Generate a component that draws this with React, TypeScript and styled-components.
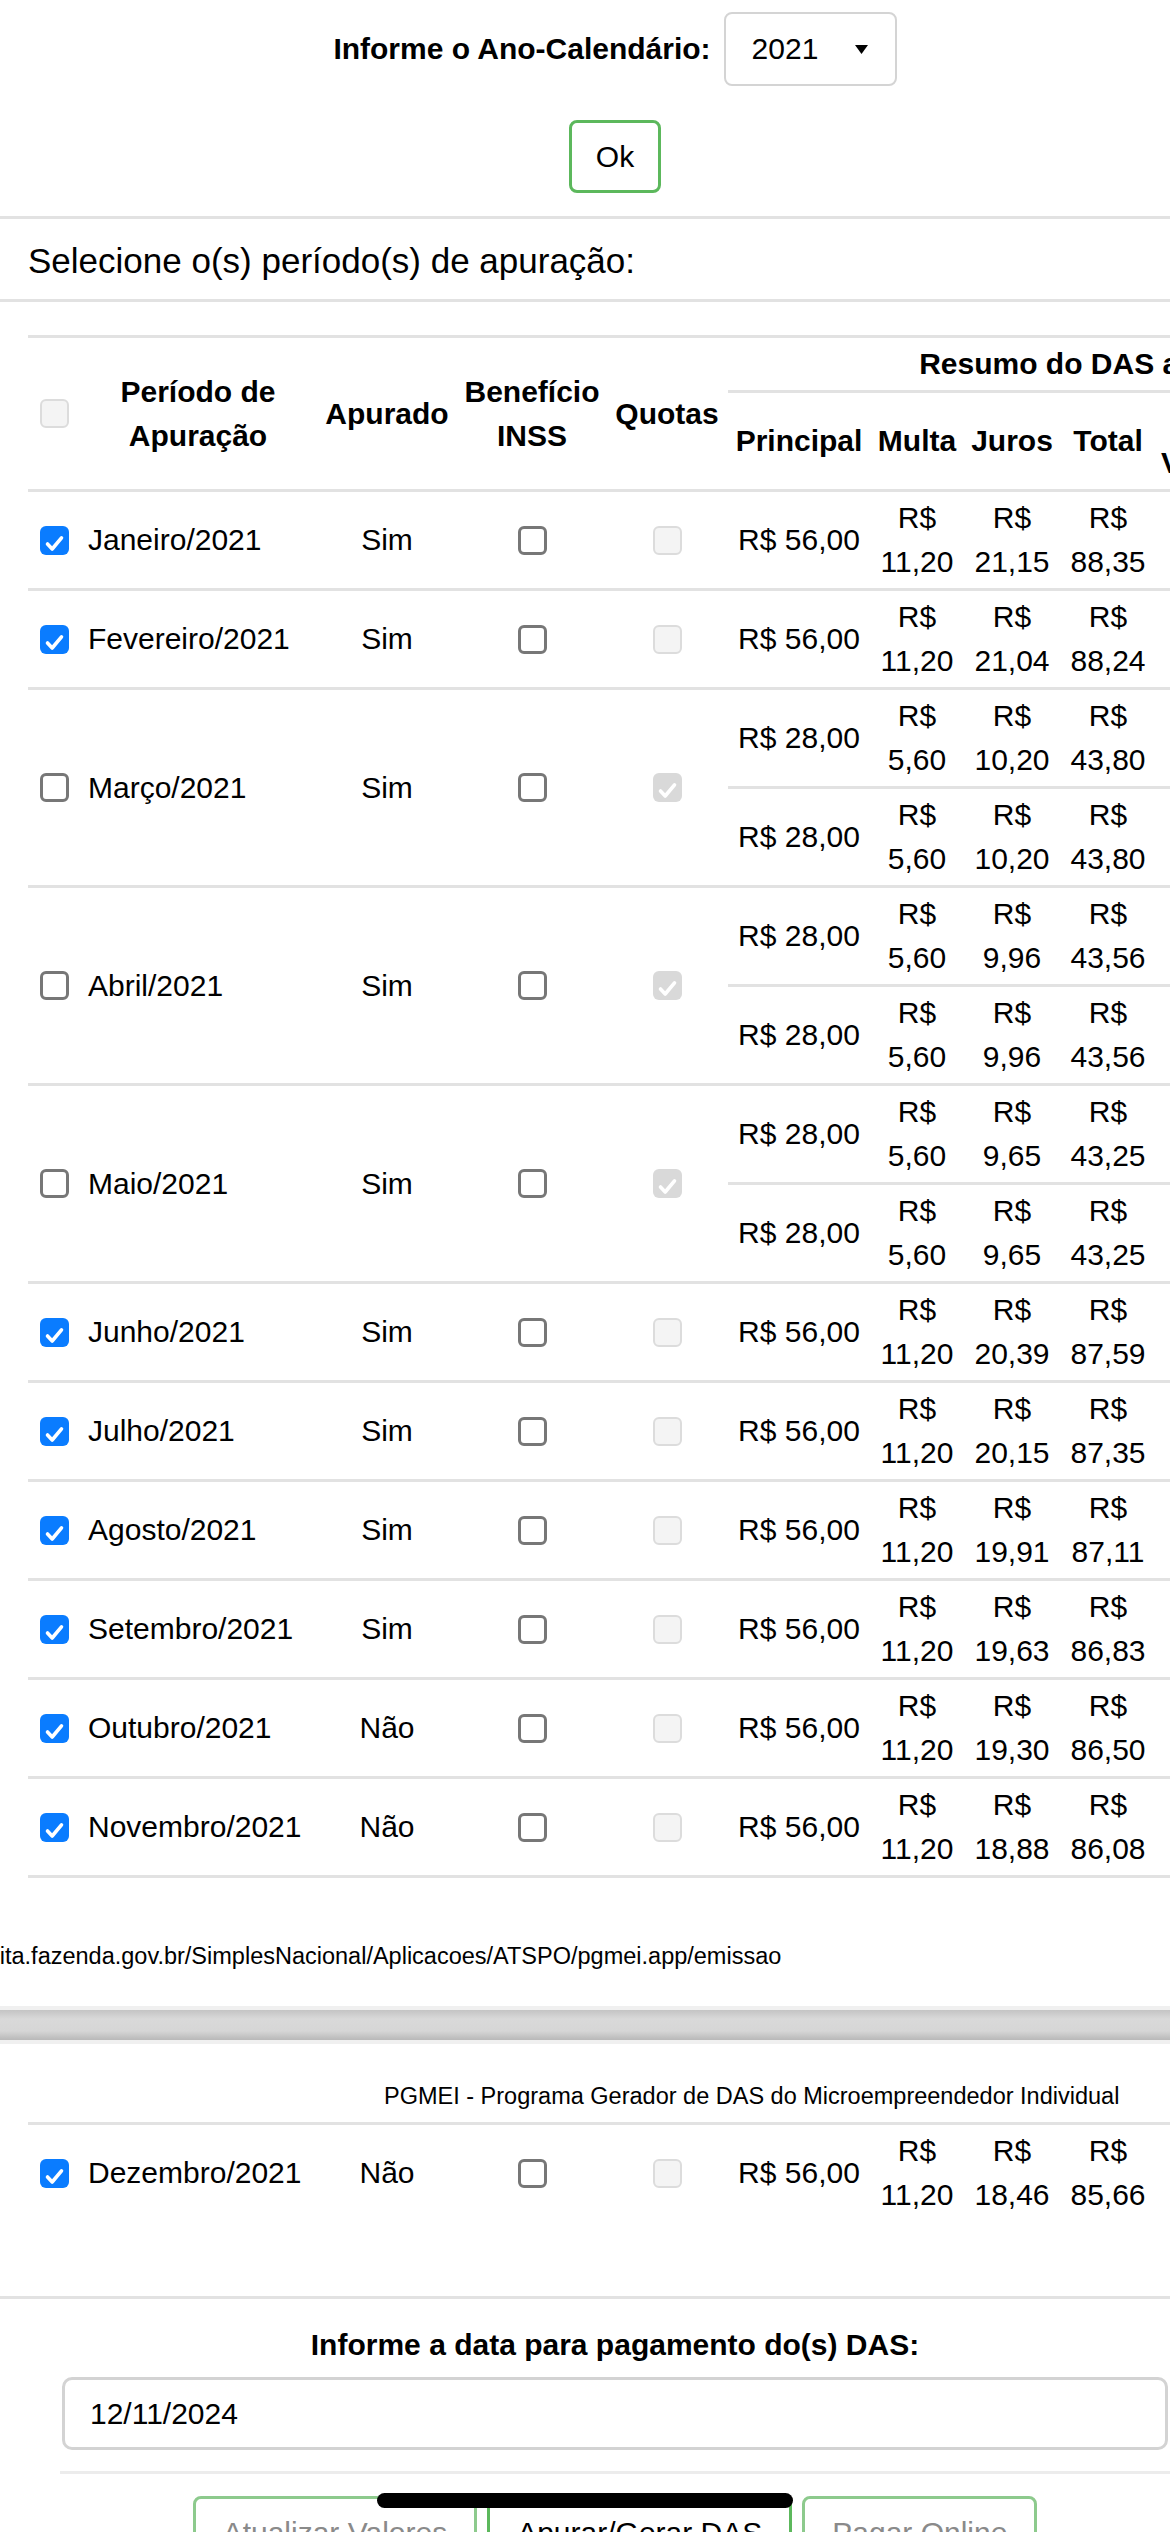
import React from "react";
import styled, { createGlobalStyle, css } from "styled-components";

const GlobalStyle = createGlobalStyle`
  html, body {
    margin: 0;
    padding: 0;
    overflow: hidden;
    background: #fff;
  }
  body {
    font-family: "Liberation Sans", Arial, Helvetica, sans-serif;
    font-size: 30px;
    color: #000;
  }
`;

const LINE = "#e2e2e2";

const Page = styled.div`
  width: 1230px;
`;

const YearBar = styled.div`
  display: flex;
  justify-content: center;
  align-items: center;
  gap: 13px;
  padding-top: 12px;
`;

const FieldLabel = styled.span`
  font-weight: 700;
  font-size: 30px;
`;

const SelectBox = styled.div`
  display: flex;
  align-items: center;
  justify-content: space-between;
  box-sizing: border-box;
  width: 173px;
  height: 74px;
  padding: 0 27px 0 26px;
  border: 2px solid #d4d4d4;
  border-radius: 8px;
  font-size: 30px;
`;

const Centered = styled.div<{ $top: number; $gap?: number }>`
  display: flex;
  justify-content: center;
  gap: ${({ $gap }) => $gap ?? 0}px;
  margin-top: ${({ $top }) => $top}px;
`;

const ActionButton = styled.button<{ $muted?: boolean; $pad?: number }>`
  box-sizing: border-box;
  height: 73px;
  padding: 0 ${({ $pad }) => $pad ?? 27}px;
  background: #fff;
  border: 3px solid ${({ $muted }) => ($muted ? "#8dca8d" : "#5cb85c")};
  border-radius: 8px;
  font-family: "Liberation Sans", Arial, Helvetica, sans-serif;
  font-size: 30px;
  color: ${({ $muted }) => ($muted ? "#8a8a8a" : "#000")};
`;

const Rule = styled.hr<{ $top?: number; $inset?: number; $soft?: boolean }>`
  margin: ${({ $top }) => $top ?? 0}px 0 0 ${({ $inset }) => $inset ?? 0}px;
  border: 0;
  height: 3px;
  background: ${({ $soft }) => ($soft ? "#ececec" : LINE)};
`;

const SectionTitle = styled.div`
  padding: 22px 0 18px 28px;
  font-size: 35px;
  line-height: 40px;
`;

const TableWrap = styled.div<{ $top: number }>`
  padding-left: 28px;
  margin-top: ${({ $top }) => $top}px;
`;

const Grid = styled.table<{ $closed?: boolean }>`
  border-collapse: separate;
  border-spacing: 0;
  table-layout: fixed;
  width: 1504px;
  font-size: 30px;
  line-height: 44px;
  ${({ $closed }) =>
    $closed &&
    css`
      border-bottom: 3px solid ${LINE};
    `}
`;

const Th = styled.th`
  border-top: 3px solid ${LINE};
  padding: 4px 5px;
  font-weight: 700;
  text-align: center;
  vertical-align: middle;
`;

const Td = styled.td<{ $left?: boolean }>`
  border-top: 3px solid ${LINE};
  padding: ${({ $left }) => ($left ? "4px 5px 4px 8px" : "4px 5px")};
  text-align: ${({ $left }) => ($left ? "left" : "center")};
  vertical-align: middle;
  white-space: ${({ $left }) => ($left ? "nowrap" : "normal")};
`;

type BoxKind = "checked" | "empty" | "disabled" | "locked";

const Box = styled.span<{ $kind: BoxKind }>`
  display: block;
  box-sizing: border-box;
  width: 29px;
  height: 29px;
  margin: 0 auto;
  border-radius: 6px;
  ${({ $kind }) => {
    switch ($kind) {
      case "checked":
        return css`
          background: #0a7cff;
        `;
      case "empty":
        return css`
          background: #fff;
          border: 3px solid #777;
        `;
      case "locked":
        return css`
          background: #d9d9d9;
        `;
      default:
        return css`
          background: #f4f4f4;
          border: 2px solid #dcdcdc;
        `;
    }
  }}
`;

const Check = ({ kind }: { kind: BoxKind }) => (
  <Box $kind={kind}>
    {(kind === "checked" || kind === "locked") && (
      <svg width="29" height="29" viewBox="0 0 29 29">
        <path
          d="M7.5 15 L12.2 20 L21.5 8.8"
          fill="none"
          stroke="#fff"
          strokeWidth="3.6"
          strokeLinecap="round"
          strokeLinejoin="round"
        />
      </svg>
    )}
  </Box>
);

const FooterUrl = styled.div`
  margin: 64px 0 0 -187px;
  font-size: 23.5px;
  line-height: 28px;
  white-space: nowrap;
`;

const PageBreak = styled.div`
  margin-top: 40px;
  height: 30px;
  background: linear-gradient(#c4c4c4, #d9d9d9 30%, #d6d6d6 70%, #b8b8b8);
  box-shadow: 0 -4px 0 #f0f0f0, 0 4px 0 #f0f0f0;
`;

const PrintHeader = styled.div`
  margin-top: 42px;
  padding-left: 384px;
  font-size: 23.5px;
  line-height: 28px;
  white-space: nowrap;
`;

const DateTitle = styled.div`
  margin-top: 24px;
  text-align: center;
  font-weight: 700;
  font-size: 30px;
  line-height: 44px;
`;

const DateField = styled.div`
  display: flex;
  align-items: center;
  box-sizing: border-box;
  width: 1106px;
  height: 73px;
  margin: 10px 0 0 62px;
  padding-left: 25px;
  border: 3px solid #d3d3d3;
  border-radius: 10px;
  font-size: 30px;
`;

const HomeIndicator = styled.div`
  position: fixed;
  left: 50%;
  bottom: 24px;
  width: 416px;
  height: 15px;
  transform: translateX(-50%);
  border-radius: 8px;
  background: #000;
`;

type Charge = { principal: string; multa: string; juros: string; total: string };
type Period = { label: string; apurado: string; selected: boolean; charges: Charge[] };

const full = (juros: string, total: string): Charge => ({ principal: "56,00", multa: "11,20", juros, total });
const half = (juros: string, total: string): Charge => ({ principal: "28,00", multa: "5,60", juros, total });

const periods: Period[] = [
  { label: "Janeiro/2021", apurado: "Sim", selected: true, charges: [full("21,15", "88,35")] },
  { label: "Fevereiro/2021", apurado: "Sim", selected: true, charges: [full("21,04", "88,24")] },
  { label: "Março/2021", apurado: "Sim", selected: false, charges: [half("10,20", "43,80"), half("10,20", "43,80")] },
  { label: "Abril/2021", apurado: "Sim", selected: false, charges: [half("9,96", "43,56"), half("9,96", "43,56")] },
  { label: "Maio/2021", apurado: "Sim", selected: false, charges: [half("9,65", "43,25"), half("9,65", "43,25")] },
  { label: "Junho/2021", apurado: "Sim", selected: true, charges: [full("20,39", "87,59")] },
  { label: "Julho/2021", apurado: "Sim", selected: true, charges: [full("20,15", "87,35")] },
  { label: "Agosto/2021", apurado: "Sim", selected: true, charges: [full("19,91", "87,11")] },
  { label: "Setembro/2021", apurado: "Sim", selected: true, charges: [full("19,63", "86,83")] },
  { label: "Outubro/2021", apurado: "Não", selected: true, charges: [full("19,30", "86,50")] },
  { label: "Novembro/2021", apurado: "Não", selected: true, charges: [full("18,88", "86,08")] },
];

const december: Period = {
  label: "Dezembro/2021",
  apurado: "Não",
  selected: true,
  charges: [full("18,46", "85,66")],
};

const widths = [52, 236, 142, 148, 122, 142, 94, 96, 96, 166, 210];

const Cols = () => (
  <colgroup>
    {widths.map((w, i) => (
      <col key={i} style={{ width: w }} />
    ))}
  </colgroup>
);

const ChargeCells = ({ c }: { c: Charge }) => (
  <>
    <Td>R$ {c.principal}</Td>
    <Td>R$ {c.multa}</Td>
    <Td>R$ {c.juros}</Td>
    <Td>R$ {c.total}</Td>
    <Td />
    <Td />
  </>
);

const PeriodRows = ({ p }: { p: Period }) => {
  const span = p.charges.length;
  const split = span > 1;
  return (
    <>
      <tr>
        <Td rowSpan={span}>
          <Check kind={p.selected ? "checked" : "empty"} />
        </Td>
        <Td rowSpan={span} $left>
          {p.label}
        </Td>
        <Td rowSpan={span}>{p.apurado}</Td>
        <Td rowSpan={span}>
          <Check kind="empty" />
        </Td>
        <Td rowSpan={span}>
          <Check kind={split ? "locked" : "disabled"} />
        </Td>
        <ChargeCells c={p.charges[0]} />
      </tr>
      {p.charges.slice(1).map((c, i) => (
        <tr key={i}>
          <ChargeCells c={c} />
        </tr>
      ))}
    </>
  );
};

const Arrow = () => (
  <svg width="13" height="9" viewBox="0 0 13 9">
    <polygon points="0,0 13,0 6.5,9" fill="#000" />
  </svg>
);

export default function App() {
  return (
    <Page>
      <GlobalStyle />
      <YearBar>
        <FieldLabel>Informe o Ano-Calendário:</FieldLabel>
        <SelectBox>
          <span>2021</span>
          <Arrow />
        </SelectBox>
      </YearBar>
      <Centered $top={34}>
        <ActionButton $pad={24}>Ok</ActionButton>
      </Centered>

      <Rule $top={23} />
      <SectionTitle>Selecione o(s) período(s) de apuração:</SectionTitle>
      <Rule />

      <TableWrap $top={33}>
        <Grid $closed>
          <Cols />
          <thead>
            <tr>
              <Th rowSpan={2}>
                <Check kind="disabled" />
              </Th>
              <Th rowSpan={2}>Período de Apuração</Th>
              <Th rowSpan={2}>Apurado</Th>
              <Th rowSpan={2}>Benefício INSS</Th>
              <Th rowSpan={2}>Quotas</Th>
              <Th colSpan={6}>Resumo do DAS a ser gerado</Th>
            </tr>
            <tr>
              <Th>Principal</Th>
              <Th>Multa</Th>
              <Th>Juros</Th>
              <Th>Total</Th>
              <Th>Data de Vencimento</Th>
              <Th />
            </tr>
          </thead>
          <tbody>
            {periods.map((p) => (
              <PeriodRows key={p.label} p={p} />
            ))}
          </tbody>
        </Grid>
      </TableWrap>

      <FooterUrl>
        https://www8.receita.fazenda.gov.br/SimplesNacional/Aplicacoes/ATSPO/pgmei.app/emissao
      </FooterUrl>
      <PageBreak />
      <PrintHeader>PGMEI - Programa Gerador de DAS do Microempreendedor Individual</PrintHeader>

      <TableWrap $top={12}>
        <Grid>
          <Cols />
          <tbody>
            <PeriodRows p={december} />
          </tbody>
        </Grid>
      </TableWrap>

      <Rule $top={75} />
      <DateTitle>Informe a data para pagamento do(s) DAS:</DateTitle>
      <DateField>12/11/2024</DateField>
      <Rule $top={21} $inset={60} $soft />

      <Centered $top={22} $gap={10}>
        <ActionButton $muted $pad={27}>Atualizar Valores</ActionButton>
        <ActionButton $pad={27}>Apurar/Gerar DAS</ActionButton>
        <ActionButton $muted $pad={27}>Pagar Online</ActionButton>
      </Centered>
      <HomeIndicator />
    </Page>
  );
}
